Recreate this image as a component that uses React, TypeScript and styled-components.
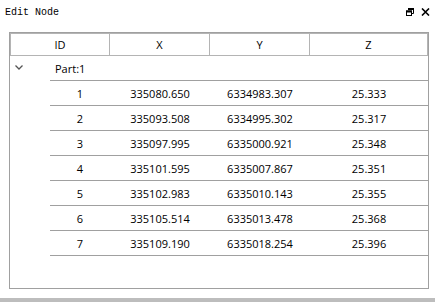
import styled, { createGlobalStyle } from "styled-components";

const GlobalStyle = createGlobalStyle`
  body {
    margin: 0;
    background: #ffffff;
  }
`;

type Node = { id: number; x: string; y: string; z: string };

const nodes: Node[] = [
  { id: 1, x: "335080.650", y: "6334983.307", z: "25.333" },
  { id: 2, x: "335093.508", y: "6334995.302", z: "25.317" },
  { id: 3, x: "335097.995", y: "6335000.921", z: "25.348" },
  { id: 4, x: "335101.595", y: "6335007.867", z: "25.351" },
  { id: 5, x: "335102.983", y: "6335010.143", z: "25.355" },
  { id: 6, x: "335105.514", y: "6335013.478", z: "25.368" },
  { id: 7, x: "335109.190", y: "6335018.254", z: "25.396" },
];

const App = () => {
  return (
    <Window>
      <GlobalStyle />
      <TitleBar>
        <Title>Edit Node</Title>
        <TitleButtons>
          <svg width="8" height="8" viewBox="0 0 8 8">
            <path d="M2 0.5h5.5v5h-2" fill="none" stroke="#000" strokeWidth="1" />
            <rect x="2" y="0" width="6" height="2" fill="#000" />
            <rect x="0.5" y="3" width="5" height="4.5" fill="#fff" stroke="#000" strokeWidth="1" />
            <rect x="0" y="2.5" width="6" height="2" fill="#000" />
          </svg>
          <svg width="9" height="8" viewBox="0 0 9 8">
            <path d="M1 0.5l7 7M8 0.5l-7 7" stroke="#000" strokeWidth="1.6" />
          </svg>
        </TitleButtons>
      </TitleBar>
      <Content>
        <Table>
          <HeaderRow>
            <HeaderCell>ID</HeaderCell>
            <HeaderCell>X</HeaderCell>
            <HeaderCell>Y</HeaderCell>
            <HeaderCell>Z</HeaderCell>
          </HeaderRow>
          <GroupRow>
            <Toggle>
              <svg width="8" height="5" viewBox="0 0 8 5">
                <path d="M0.5 0.5l3.5 3.5l3.5-3.5" fill="none" stroke="#555" strokeWidth="1.3" />
              </svg>
            </Toggle>
            <GroupLabel>Part:1</GroupLabel>
          </GroupRow>
          {nodes.map((n) => (
            <NodeRow key={n.id}>
              <Cell>{n.id}</Cell>
              <Cell>{n.x}</Cell>
              <Cell>{n.y}</Cell>
              <Cell>{n.z}</Cell>
            </NodeRow>
          ))}
        </Table>
      </Content>
      <StatusStrip />
    </Window>
  );
};

const Window = styled.div`
  width: 435px;
  height: 302px;
  display: flex;
  flex-direction: column;
  background: #ffffff;
  overflow: hidden;
`;

const TitleBar = styled.div`
  height: 24px;
  display: flex;
  align-items: center;
  justify-content: space-between;
  padding: 0 5px 0 5px;
  box-sizing: border-box;
`;

const Title = styled.div`
  font-family: "Liberation Mono", "DejaVu Sans Mono", monospace;
  font-size: 10px;
  color: #000;
`;

const TitleButtons = styled.div`
  display: flex;
  align-items: center;
  gap: 7px;
`;

const Content = styled.div`
  padding: 8px 6px 0 9px;
`;

const Table = styled.div`
  height: 257px;
  box-sizing: border-box;
  border: 1px solid #a0a0a0;
  font-family: "Open Sans", "Liberation Sans", sans-serif;
  font-size: 11px;
  color: #000;
`;

const HeaderRow = styled.div`
  display: grid;
  grid-template-columns: 100px 100px 100px 1fr;
  height: 23px;
`;

const HeaderCell = styled.div`
  display: flex;
  align-items: center;
  justify-content: center;
  border: 1px solid #b4b4b4;
  border-left-width: 0;
  &:first-child {
    border-left-width: 1px;
  }
`;

const GroupRow = styled.div`
  display: flex;
  height: 25px;
`;

const Toggle = styled.div`
  width: 40px;
  display: flex;
  align-items: center;
  padding: 0 0 2px 5px;
  box-sizing: border-box;
`;

const GroupLabel = styled.div`
  flex: 1;
  display: flex;
  align-items: center;
  padding-left: 5px;
  border-bottom: 1px solid #a0a0a0;
`;

const NodeRow = styled.div`
  display: grid;
  grid-template-columns: 60px 100px 100px 1fr;
  height: 25px;
  box-sizing: border-box;
  margin-left: 40px;
  border-bottom: 1px solid #a0a0a0;
`;

const Cell = styled.div`
  display: flex;
  align-items: center;
  justify-content: center;
`;

const StatusStrip = styled.div`
  margin-top: auto;
  height: 4px;
  background: #bdbdbd;
`;

export default App;
